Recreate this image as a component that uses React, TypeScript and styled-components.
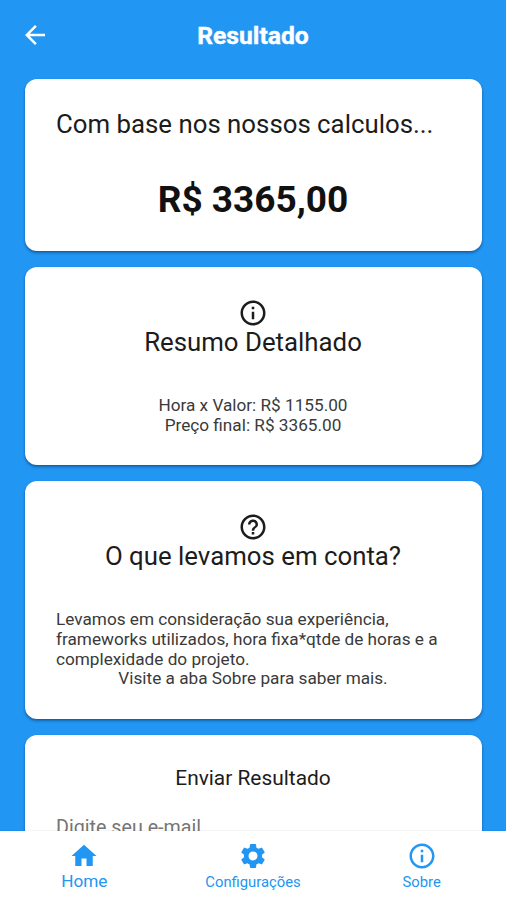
import React from 'react';
import styled, { createGlobalStyle } from 'styled-components';
import { MdArrowBack, MdHelpOutline, MdHome, MdInfoOutline, MdSettings } from 'react-icons/md';

const GlobalStyle = createGlobalStyle`
  * { box-sizing: border-box; }
  body { margin: 0; font-family: Roboto, sans-serif; color: #1c1c1c; }
  svg { display: block; flex: none; }
`;

const Screen = styled.div`
  height: 900px;
  display: flex;
  flex-direction: column;
  overflow: hidden;
  background: #2196f3;
`;

const AppBar = styled.header`
  flex: none;
  height: 71px;
  display: grid;
  grid-template-columns: 50px 1fr 50px;
  align-items: center;
  padding: 0 20px;
  color: #fff;
`;

const BackButton = styled.button`
  width: 30px;
  height: 30px;
  margin-bottom: 1px;
  padding: 0;
  border: 0;
  background: none;
  color: inherit;
`;

const Title = styled.h1`
  margin: 0;
  text-align: center;
  font-size: 24.7px;
  line-height: 30px;
  font-weight: 700;
  -webkit-text-stroke: 0.4px #fff;
`;

const Content = styled.main`
  flex: 1;
  min-height: 0;
  display: flex;
  flex-direction: column;
  gap: 16px;
  padding: 8px 24px 0 25px;
  overflow: hidden;
`;

const Card = styled.section<{ $height: number }>`
  flex: none;
  height: ${(p) => p.$height}px;
  display: flex;
  flex-direction: column;
  align-items: center;
  padding: 31px 32px 0 31px;
  border-radius: 12px;
  background: #fff;
  box-shadow: 0 2px 3px rgba(0, 30, 80, 0.36), 0 1px 2px rgba(0, 30, 80, 0.2);
`;

const Heading = styled.h2<{ $left?: boolean }>`
  margin: 0;
  align-self: ${(p) => (p.$left ? 'flex-start' : 'center')};
  font-size: 25.8px;
  line-height: 28px;
  font-weight: 400;
  white-space: nowrap;
`;

const Price = styled.strong`
  margin-top: 40px;
  font-size: 37px;
  line-height: 44px;
  font-weight: 700;
  color: #111;
`;

const Details = styled.div`
  align-self: stretch;
  margin-top: 40.4px;
  display: flex;
  flex-direction: column;
  align-items: center;
  font-size: 17.2px;
  line-height: 19.6px;
  color: #3a3a3a;
`;

const Paragraph = styled.p`
  margin: 0;
  align-self: stretch;
  white-space: pre-line;
`;

const DetailLine = styled.span`
  white-space: nowrap;
`;

const SendTitle = styled.h3`
  margin: 0;
  font-size: 20.9px;
  line-height: 24px;
  font-weight: 400;
`;

const EmailInput = styled.input`
  align-self: stretch;
  height: 40px;
  margin-top: 18px;
  padding: 0;
  border: 0;
  border-bottom: 1px solid #888;
  outline: 0;
  background: none;
  font: 400 19.7px Roboto, sans-serif;
  &::placeholder { color: #757575; opacity: 1; }
`;

const BottomNav = styled.nav`
  flex: none;
  height: 69px;
  display: grid;
  grid-template-columns: repeat(3, 1fr);
  background: #fff;
  box-shadow: 0 -1px 1px rgba(0, 0, 0, 0.04);
  z-index: 1;
`;

const NavItem = styled.a<{ $active?: boolean }>`
  display: flex;
  flex-direction: column;
  align-items: center;
  padding-top: 10px;
  color: #2196f3;
  font-size: ${(p) => (p.$active ? 17.2 : 14.8)}px;
  line-height: 20px;
`;

const NavLabel = styled.span<{ $active?: boolean }>`
  margin-top: ${(p) => (p.$active ? 0 : 1)}px;
`;

export default function App() {
  return (
    <>
      <GlobalStyle />
      <Screen>
        <AppBar>
          <BackButton aria-label="Voltar"><MdArrowBack size={30} /></BackButton>
          <Title>Resultado</Title>
        </AppBar>
        <Content>
          <Card $height={172}>
            <Heading $left>Com base nos nossos calculos...</Heading>
            <Price>R$ 3365,00</Price>
          </Card>
          <Card $height={198}>
            <MdInfoOutline size={30} />
            <Heading>Resumo Detalhado</Heading>
            <Details>
              <DetailLine>Hora x Valor: R$ 1155.00</DetailLine>
              <DetailLine>Preço final: R$ 3365.00</DetailLine>
            </Details>
          </Card>
          <Card $height={238}>
            <MdHelpOutline size={30} />
            <Heading>O que levamos em conta?</Heading>
            <Details>
              <Paragraph>
                {'Levamos em consideração sua experiência,\nframeworks utilizados, hora fixa*qtde de horas e a\ncomplexidade do projeto.'}
              </Paragraph>
              <DetailLine>Visite a aba Sobre para saber mais.</DetailLine>
            </Details>
          </Card>
          <Card $height={240}>
            <SendTitle>Enviar Resultado</SendTitle>
            <EmailInput placeholder="Digite seu e-mail" />
          </Card>
        </Content>
        <BottomNav>
          <NavItem $active><MdHome size={30} /><NavLabel $active>Home</NavLabel></NavItem>
          <NavItem><MdSettings size={30} /><NavLabel>Configurações</NavLabel></NavItem>
          <NavItem><MdInfoOutline size={30} /><NavLabel>Sobre</NavLabel></NavItem>
        </BottomNav>
      </Screen>
    </>
  );
}
